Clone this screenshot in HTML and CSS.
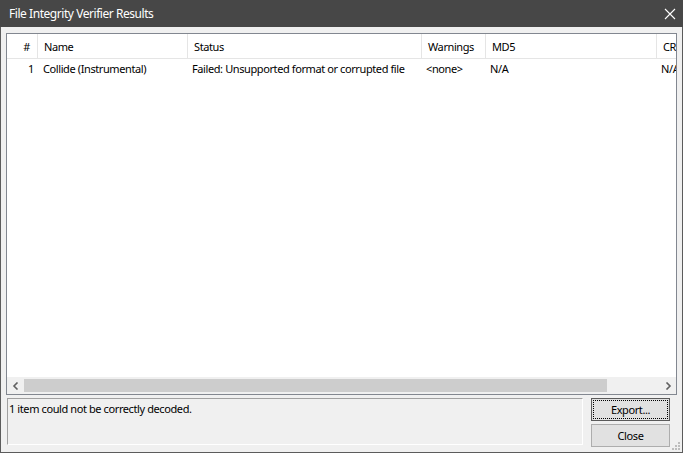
FILE: index.html
```html
<!DOCTYPE html>
<html>
<head>
<meta charset="utf-8">
<link rel="stylesheet" href="styles.css">
</head>
<body>
<div class="window">
  <div class="titlebar">
    <span class="title">File Integrity Verifier Results</span>
    <svg class="close" width="12" height="12" viewBox="0 0 12 12"><path d="M1 1 L11 11 M11 1 L1 11" stroke="#fff" stroke-width="1.1" fill="none"/></svg>
  </div>
  <div class="body">
    <div class="list">
      <div class="table">
        <div class="row header">
          <div class="cell c-num">#</div>
          <div class="cell c-name">Name</div>
          <div class="cell c-status">Status</div>
          <div class="cell c-warn">Warnings</div>
          <div class="cell c-md5">MD5</div>
          <div class="cell c-crc">CRC32</div>
        </div>
        <div class="row item">
          <div class="cell c-num">1</div>
          <div class="cell c-name">Collide (Instrumental)</div>
          <div class="cell c-status">Failed: Unsupported format or corrupted file</div>
          <div class="cell c-warn">&lt;none&gt;</div>
          <div class="cell c-md5">N/A</div>
          <div class="cell c-crc">N/A</div>
        </div>
      </div>
      <div class="hscroll">
        <div class="arrow"><svg width="8" height="8" viewBox="0 0 8 8"><path d="M5.5 0.5 L2 4 L5.5 7.5" stroke="#606060" stroke-width="1.6" fill="none"/></svg></div>
        <div class="track"><div class="thumb"></div></div>
        <div class="arrow"><svg width="8" height="8" viewBox="0 0 8 8"><path d="M2.5 0.5 L6 4 L2.5 7.5" stroke="#606060" stroke-width="1.6" fill="none"/></svg></div>
      </div>
    </div>
    <div class="footer">
      <div class="status">1 item could not be correctly decoded.</div>
      <div class="buttons">
        <button class="btn default"><span class="focus">Export...</span></button>
        <button class="btn">Close</button>
      </div>
    </div>
  </div>
  <svg class="grip" width="10" height="10" viewBox="0 0 10 10">
    <rect x="7" y="1" width="2" height="2" fill="#bdbdbd"/>
    <rect x="4" y="4" width="2" height="2" fill="#bdbdbd"/>
    <rect x="7" y="4" width="2" height="2" fill="#bdbdbd"/>
    <rect x="1" y="7" width="2" height="2" fill="#bdbdbd"/>
    <rect x="4" y="7" width="2" height="2" fill="#bdbdbd"/>
    <rect x="7" y="7" width="2" height="2" fill="#bdbdbd"/>
  </svg>
</div>
</body>
</html>
```

FILE: styles.css
```css
* { box-sizing: border-box; }
html, body { margin: 0; padding: 0; }
body {
  width: 683px;
  height: 453px;
  overflow: hidden;
  background: #f0f0f0;
  font-family: "Noto Sans", "Open Sans", sans-serif;
  font-size: 11px;
  letter-spacing: -0.4px;
  color: #000;
}
.window {
  position: relative;
  width: 683px;
  height: 453px;
  background: #f0f0f0;
  border-left: 1px solid #5c5c5c;
  border-right: 1px solid #5c5c5c;
  border-bottom: 1px solid #5c5c5c;
  display: flex;
  flex-direction: column;
}
.titlebar {
  height: 27px;
  flex: none;
  background: #474747;
  margin: 0 -1px;
  display: flex;
  align-items: center;
  justify-content: space-between;
  padding: 0 7px 1px 9px;
  color: #fff;
  font-size: 12px;
}
.title { letter-spacing: -0.45px; }
.close { display: block; margin-top: 1px; }
.body {
  flex: 1;
  padding: 6px 5px 0 5px;
  display: flex;
  flex-direction: column;
}
.list {
  height: 362px;
  border: 1px solid #828790;
  background: #fff;
  display: flex;
  flex-direction: column;
  overflow: hidden;
}
.table { flex: 1; overflow: hidden; }
.row { display: flex; white-space: nowrap; }
.cell { flex: none; overflow: hidden; }
.header { height: 25px; border-bottom: 1px solid #e5e5e5; }
.header .cell {
  border-right: 1px solid #e5e5e5;
  line-height: 24px;
  padding: 1px 6px 0 6px;
  height: 24px;
}
.item { height: 18px; }
.item .cell { line-height: 18px; padding: 1px 4px 0 4px; height: 18px; }
.c-num { width: 31px; text-align: right; }
.header .c-num { padding-right: 7px; }
.item .c-num { padding-right: 4px; }
.c-name { width: 150px; }
.c-status { width: 234px; }
.c-warn { width: 64px; }
.c-md5 { width: 171px; }
.c-crc { width: 60px; border-right: none !important; }
.item .c-name { padding-left: 5px; }
.item .c-warn { padding-left: 4px; }

.hscroll {
  height: 17px;
  flex: none;
  display: flex;
  background: #f0f0f0;
}
.arrow {
  width: 17px;
  height: 17px;
  display: flex;
  align-items: center;
  justify-content: center;
}
.arrow svg { display: block; }
.track { flex: 1; padding: 2px 0; }
.thumb { width: 583px; height: 13px; background: #cdcdcd; }

.footer {
  margin-top: 3px;
  display: flex;
  gap: 8px;
  padding-left: 1px;
}
.status {
  width: 576px;
  height: 47px;
  border-top: 1px solid #a0a0a0;
  border-left: 1px solid #a0a0a0;
  border-right: 1px solid #fff;
  border-bottom: 1px solid #fff;
  padding: 2px 0 0 1px;
  line-height: 16px;
}
.buttons {
  display: flex;
  flex-direction: column;
  gap: 3px;
}
.btn {
  width: 79px;
  height: 23px;
  margin: 0;
  padding: 0;
  background: #e1e1e1;
  border: 1px solid #adadad;
  font-family: "Noto Sans", "Open Sans", sans-serif;
  font-size: 11px;
  letter-spacing: -0.4px;
  color: #000;
  display: flex;
  align-items: center;
  justify-content: center;
}
.btn.default { border-color: #5a5a5a; padding: 2px; }
.focus {
  display: flex;
  align-items: center;
  justify-content: center;
  width: 100%;
  height: 100%;
  outline: 1px dotted #000;
}
.grip { position: absolute; right: 1px; bottom: 1px; }
```
